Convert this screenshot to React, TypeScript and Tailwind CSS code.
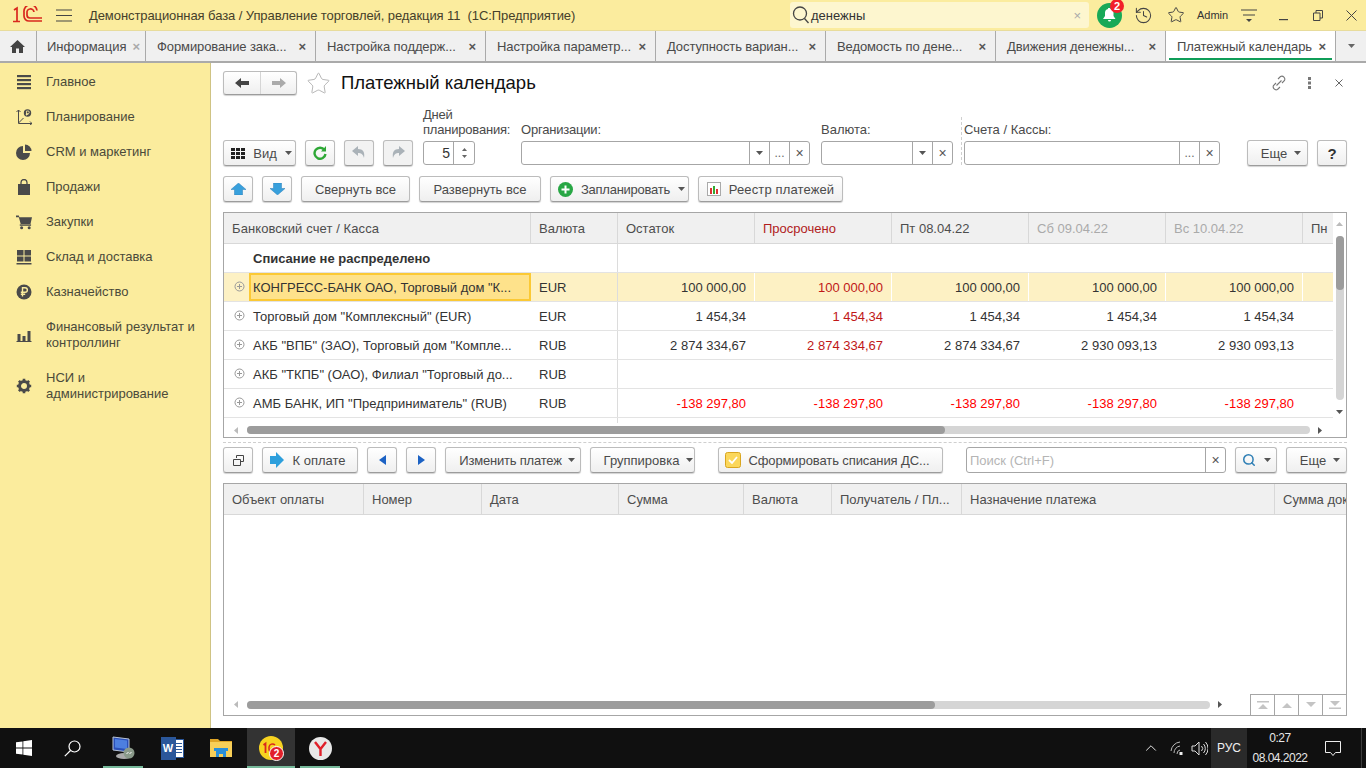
import React from "react";
import { History, Star, Search, ChevronUp } from "lucide-react";
import clsx from "clsx";

const Caret = ({ c = "#555" }: { c?: string }) => (
  <svg width="7" height="4" viewBox="0 0 7 4" className="shrink-0"><path d="M0 0h7L3.5 4z" fill={c} /></svg>
);

const Btn = ({ className, children, off }: { className?: string; children?: React.ReactNode; off?: boolean }) => (
  <div
    className={clsx(
      "h-[26px] shrink-0 flex items-center justify-center rounded-[3px] border border-[#bcbcbc] border-b-[#9c9c9c] shadow-[0_1px_1px_rgba(0,0,0,0.18)] text-[#4a4a4a]",
      off ? "bg-[#f2f2f2]" : "bg-gradient-to-b from-white to-[#efefef]",
      className
    )}
  >
    {children}
  </div>
);

const Tab = ({ label, active }: { label: string; active?: boolean }) => (
  <div className={clsx("w-[170px] h-full flex items-center pl-[11px] pr-[9px] border-r border-[#aaaaaa] relative", active ? "bg-white" : "")}>
    <span className="flex-1 whitespace-nowrap text-[#4a4a4a] tracking-[-0.1px]">{label}</span>
    <span className="text-[#555] font-bold text-[13px] leading-none">×</span>
    {active && <span className="absolute left-[3px] right-[3px] bottom-[1px] h-[2px] bg-[#0f9d58]" />}
  </div>
);

const Side = ({ icon, children, className }: { icon: React.ReactNode; children: React.ReactNode; className?: string }) => (
  <div className={clsx("flex items-center pl-[16px] gap-[14px] text-[#4a4a3a] leading-[16px]", className)}>
    <span className="w-[16px] h-[16px] shrink-0 flex items-center justify-center">{icon}</span>
    <span>{children}</span>
  </div>
);

const I = "#4a4a4a";
const sideIcons = {
  main: <svg width="16" height="16" viewBox="0 0 16 16" fill={I}><rect x="1" y="1" width="14" height="2.2" /><rect x="1" y="5" width="14" height="2.2" /><rect x="1" y="9" width="14" height="2.2" /><rect x="1" y="13" width="14" height="2.2" /></svg>,
  plan: <svg width="16" height="16" viewBox="0 0 16 16" fill="none" stroke={I} strokeWidth="1"><path d="M2.5 1v13.5H16M.5 3l2-2 2 2M14 12.5l2 2-2 1.5M2.5 14l5-5" /><circle cx="11.5" cy="4" r="3.7" fill={I} stroke="none" /><path d="M10.5 6.5V2h1.5a1.2 1.2 0 010 2.6h-2M9.8 5.5h2.5" stroke="#fbec9d" strokeWidth=".8" /></svg>,
  crm: <svg width="16" height="16" viewBox="0 0 16 16" fill={I}><path d="M7 2a7 7 0 107 7H7z" /><path d="M9 0.5a6.5 6.5 0 016.5 6.5H9z" /></svg>,
  sale: <svg width="14" height="16" viewBox="0 0 14 16"><path d="M1 5h12v11H1z" fill={I} /><path d="M4 7V3.5a3 3 0 016 0V7" fill="none" stroke={I} strokeWidth="1.3" /></svg>,
  buy: <svg width="17" height="16" viewBox="0 0 17 16" fill={I}><path d="M0 1h3l.6 2H17l-1.6 7H5L3 3H0z" /><rect x="4" y="10.5" width="12" height="1.5" /><circle cx="6" cy="14" r="1.6" /><circle cx="14" cy="14" r="1.6" /></svg>,
  store: <svg width="16" height="16" viewBox="0 0 16 16" fill={I}><rect x="1" y="1" width="6.5" height="5.5" /><rect x="8.5" y="1" width="6.5" height="5.5" /><rect x="1" y="7.5" width="6.5" height="5" /><rect x="8.5" y="7.5" width="6.5" height="5" /><rect x="0.5" y="14" width="15" height="1.5" /></svg>,
  money: <svg width="16" height="16" viewBox="0 0 16 16"><circle cx="8" cy="8" r="7.5" fill={I} /><path d="M6.5 12.5V3.8h2.6a2.2 2.2 0 010 4.5H4.8M4.8 10.3h4.4" fill="none" stroke="#fbec9d" strokeWidth="1.4" /></svg>,
  fin: <svg width="16" height="16" viewBox="0 0 16 16" fill={I}><rect x="1.5" y="7" width="3" height="7" /><rect x="6.5" y="9" width="3" height="5" /><rect x="11.5" y="4" width="3" height="10" /><rect x="0.5" y="14" width="15" height="1" /></svg>,
  gear: <svg width="16" height="16" viewBox="0 0 16 16"><circle cx="8" cy="8" r="4.5" fill="none" stroke={I} strokeWidth="3" /><path d="M8 .8v3M8 12.2v3M.8 8h3M12.2 8h3M2.9 2.9L5 5M11 11l2.1 2.1M13.1 2.9L11 5M5 11l-2.1 2.1" stroke={I} strokeWidth="2.6" /></svg>,
};

const W = ["w-[307px]", "w-[87px]", "w-[137px]", "w-[137px]", "w-[137px]", "w-[137px]", "w-[137px]", "w-[30px]"];

const HCell = ({ className, children }: { className?: string; children: React.ReactNode }) => (
  <div className={clsx("h-full shrink-0 flex items-center pl-[8px] border-r border-[#d8d8d8] whitespace-nowrap overflow-hidden text-[#4d4d4d]", className)}>{children}</div>
);

const Plus = () => (
  <svg width="11" height="11" viewBox="0 0 11 11" className="absolute left-[10px] top-[8px]" fill="none" stroke="#999"><circle cx="5.5" cy="5.5" r="4.5" /><path d="M3 5.5h5M5.5 3v5" /></svg>
);

const rows = [
  { n: 'КОНГРЕСС-БАНК ОАО, Торговый дом "К...', c: "EUR", v: ["100 000,00", "100 000,00", "100 000,00", "100 000,00", "100 000,00"], sel: true },
  { n: 'Торговый дом "Комплексный" (EUR)', c: "EUR", v: ["1 454,34", "1 454,34", "1 454,34", "1 454,34", "1 454,34"] },
  { n: 'АКБ "ВПБ" (ЗАО), Торговый дом "Компле...', c: "RUB", v: ["2 874 334,67", "2 874 334,67", "2 874 334,67", "2 930 093,13", "2 930 093,13"] },
  { n: 'АКБ "ТКПБ" (ОАО), Филиал "Торговый до...', c: "RUB", v: ["", "", "", "", ""] },
  { n: 'АМБ БАНК, ИП "Предприниматель" (RUB)', c: "RUB", v: ["-138 297,80", "-138 297,80", "-138 297,80", "-138 297,80", "-138 297,80"], neg: true },
];

const Row = ({ r }: { r: (typeof rows)[number] }) => (
  <div className={clsx("h-[29px] flex border-b border-[#e3e3e3] text-[#333]", r.sel && "bg-[#fdf1c4]")}>
    <div className="w-[307px] shrink-0 relative flex items-center pl-[29px]">
      <Plus />
      {r.sel && <span className="absolute left-[25px] top-0 right-0 bottom-0 border-2 border-[#fbc935] bg-[#fee28b]" />}
      <span className="relative whitespace-nowrap">{r.n}</span>
    </div>
    <div className="w-[87px] shrink-0 flex items-center pl-[8px] border-r border-[#dcdcdc]">{r.c}</div>
    {r.v.map((v, i) => (
      <div
        key={i}
        className={clsx(
          "w-[137px] shrink-0 flex items-center justify-end",
          r.sel ? "border-r border-white pr-[8px]" : "pr-[9px]",
          r.neg ? "text-[#ff0000]" : i === 1 && "text-[#c01818]"
        )}
      >
        {v}
      </div>
    ))}
  </div>
);

const HBar = ({ track, thumb }: { track: string; thumb: string }) => (
  <div className="flex items-center h-full">
    <svg width="4" height="7" viewBox="0 0 4 7" className="ml-[10px]"><path d="M4 0v7L0 3.5z" fill="#bbb" /></svg>
    <div className={clsx("ml-[9px] h-[8px] rounded-full bg-[#d5d5d5]", track)}>
      <div className={clsx("h-full rounded-full bg-[#9c9c9c]", thumb)} />
    </div>
    <svg width="4" height="7" viewBox="0 0 4 7" className="ml-[8px]"><path d="M0 0v7l4-3.5z" fill="#555" /></svg>
  </div>
);

const Fld = ({ className, children }: { className?: string; children?: React.ReactNode }) => (
  <div className={clsx("h-[24px] mb-[1px] flex rounded-[3px] border border-[#a6a6a6] bg-white", className)}>{children}</div>
);
const Seg = ({ children }: { children: React.ReactNode }) => (
  <div className="w-[20px] shrink-0 border-l border-[#a6a6a6] flex items-center justify-center text-[#666] text-[12px]">{children}</div>
);
const X = () => <span className="text-[#555] text-[14px] leading-none">×</span>;

const Pager = ({ d }: { d: string }) => (
  <div className="w-[24px] h-full border-l border-[#a6a6a6] flex items-center justify-center">
    <svg width="12" height="8" viewBox="0 0 12 8"><path d={d} fill="#c4c4c4" /></svg>
  </div>
);

export default function App() {
  return (
    <div className="w-[1366px] h-[768px] overflow-hidden flex flex-col bg-white font-['Liberation_Sans',Arial,sans-serif] text-[13px] leading-[15px]">
      {/* title bar */}
      <div className="h-[31px] shrink-0 bg-[#fbec9e] border-b border-[#e8dc9c] flex items-center">
        <svg width="30" height="18" viewBox="0 0 30 18" className="ml-[13px]" fill="none" stroke="#d9281e" strokeWidth="1.7">
          <path d="M1 4l3-2v13M0 15.5h7" />
          <path d="M24 4.5A6 6 0 0011 6v4a5 5 0 005 5h13" />
          <path d="M21 6a3 3 0 00-7 1v2a3 3 0 003 3h12" />
        </svg>
        <svg width="16" height="13" viewBox="0 0 16 13" className="ml-[13px]" stroke="#444" strokeWidth="1.2"><path d="M0 1h16M0 6.5h16M0 12h16" /></svg>
        <span className="ml-[17px] w-[701px] shrink-0 text-[#45402a] whitespace-pre tracking-[-0.08px]">Демонстрационная база / Управление торговлей, редакция 11  (1С:Предприятие)</span>
        <div className="w-[299px] h-[26px] shrink-0 bg-[#fdf6cf] rounded-[3px] flex items-center pl-[2px] pr-[8px]">
          <svg width="18" height="20" viewBox="0 0 18 20" fill="none" stroke="#444" strokeWidth="1.3"><circle cx="8" cy="8.5" r="6.5" /><path d="M12.5 13.5l4 4.5" /></svg>
          <span className="ml-[1px] flex-1 text-[#333]">денежны</span>
          <span className="text-[#aaa] text-[13px] leading-none">×</span>
        </div>
        <div className="relative ml-[8px] w-[25px] h-[25px] rounded-full bg-[#18a957] flex items-center justify-center shrink-0">
          <svg width="13" height="14" viewBox="0 0 13 14" fill="#fff"><path d="M6.5 0a1 1 0 011 1 4 4 0 013 4v3l2 3H0l2-3V5a4 4 0 013-4 1 1 0 011.5-1zM5 12h3a1.5 1.5 0 01-3 0z" /></svg>
          <span className="absolute -top-[4px] -right-[2px] w-[14px] h-[14px] rounded-full bg-[#f2202a] text-white text-[11px] font-bold leading-[14px] text-center">2</span>
        </div>
        <History size={19} strokeWidth={1.3} color="#444" className="ml-[12px] shrink-0" />
        <Star size={18} strokeWidth={1.3} color="#444" className="ml-[14px] shrink-0" />
        <span className="ml-[12px] text-[11px] text-[#333]">Admin</span>
        <svg width="16" height="15" viewBox="0 0 16 15" className="ml-[13px] shrink-0" stroke="#444" strokeWidth="1.2"><path d="M0 2h16M2 7h12" /><path d="M5 11h6l-3 3z" fill="#444" stroke="none" /></svg>
        <svg width="9" height="2" viewBox="0 0 9 2" className="ml-[22px] mt-[10px] shrink-0"><rect width="9" height="1.2" fill="#444" /></svg>
        <svg width="10" height="11" viewBox="0 0 10 11" className="ml-[25px] shrink-0" fill="none" stroke="#444"><path d="M.5 3h6.5v7.5H.5zM3 3V.5h6.5v7.5H7" /></svg>
        <svg width="11" height="11" viewBox="0 0 11 11" className="ml-[23px] shrink-0" stroke="#444"><path d="M.5.5l10 10M10.5.5l-10 10" /></svg>
      </div>

      {/* tabs */}
      <div className="h-[32px] shrink-0 bg-[#f0f0f0] border-b-2 border-[#aaaaaa] flex items-center">
        <div className="w-[37px] h-full border-r border-[#aaaaaa] flex items-center justify-center shrink-0 pr-[2px]">
          <svg width="15" height="13" viewBox="0 0 15 13" fill="#444"><path d="M7.5 0L15 7h-2v6H9V8.5H6V13H2V7H0z" /></svg>
        </div>
        <div className="w-[109px] h-full flex items-center pl-[10px] pr-[5px] border-r border-[#aaaaaa] shrink-0">
          <span className="flex-1 text-[#4a4a4a]">Информация</span>
          <span className="text-[#aaa] font-bold leading-none">×</span>
        </div>
        {["Формирование зака...", "Настройка поддерж...", "Настройка параметр...", "Доступность вариан...", "Ведомость по дене...", "Движения денежны..."].map((t) => (
          <Tab key={t} label={t} />
        ))}
        <Tab label="Платежный календарь" active />
        <div className="flex-1 flex items-center justify-center"><Caret c="#666" /></div>
      </div>

      <div className="flex-1 min-h-0 flex">
        {/* sidebar */}
        <div className="w-[211px] shrink-0 bg-[#fbec9d] border-r border-[#cfc384] pt-[1px]">
          <Side icon={sideIcons.main} className="h-[35px]">Главное</Side>
          <Side icon={sideIcons.plan} className="h-[35px]">Планирование</Side>
          <Side icon={sideIcons.crm} className="h-[35px]">CRM и маркетинг</Side>
          <Side icon={sideIcons.sale} className="h-[35px]">Продажи</Side>
          <Side icon={sideIcons.buy} className="h-[35px]">Закупки</Side>
          <Side icon={sideIcons.store} className="h-[35px]">Склад и доставка</Side>
          <Side icon={sideIcons.money} className="h-[35px]">Казначейство</Side>
          <Side icon={sideIcons.fin} className="h-[51px]">Финансовый результат и<br />контроллинг</Side>
          <Side icon={sideIcons.gear} className="h-[52px]">НСИ и<br />администрирование</Side>
        </div>

        {/* main */}
        <div className="flex-1 min-w-0 pl-[12px] pr-[19px] text-[#4a4a4a]">
          {/* title row */}
          <div className="mt-[8px] h-[24px] flex items-center">
            <div className="w-[74px] h-[24px] flex rounded-[3px] border border-[#bcbcbc] border-b-[#9c9c9c] bg-gradient-to-b from-white to-[#efefef] shadow-[0_1px_1px_rgba(0,0,0,0.18)]">
              <div className="w-[37px] flex items-center justify-center border-r border-[#d5d5d5]">
                <svg width="14" height="10" viewBox="0 0 14 10" fill="#444"><path d="M0 5l6-5v3h8v4H6v3z" /></svg>
              </div>
              <div className="flex-1 flex items-center justify-center">
                <svg width="14" height="10" viewBox="0 0 14 10" fill="#aaa"><path d="M14 5L8 0v3H0v4h8v3z" /></svg>
              </div>
            </div>
            <Star size={25} strokeWidth={0.8} color="#a8a8a8" className="ml-[9px] shrink-0" />
            <span className="ml-[10px] text-[18.5px] leading-[22px] text-[#111]">Платежный календарь</span>
            <svg width="16" height="16" viewBox="0 0 16 16" className="ml-auto" fill="none" stroke="#777" strokeWidth="1.1"><path d="M7 4l2.5-2.5a3 3 0 014 4L11 8M9 12l-2.500 2.500a3 3 0 01-4-4L5 8M5.500 10.500l5-5" /></svg>
            <svg width="3" height="12" viewBox="0 0 3 12" className="ml-[21px]" fill="#777"><rect width="3" height="3" /><rect y="4.5" width="3" height="3" /><rect y="9" width="3" height="3" /></svg>
            <svg width="8" height="8" viewBox="0 0 8 8" className="ml-[24px] mr-[4px]" stroke="#666"><path d="M.5.5l7 7M7.5.5l-7 7" /></svg>
          </div>

          {/* filter row */}
          <div className="mt-[12px] h-[59px] flex items-end">
            <Btn className="w-[73px] gap-[8px] pl-[4px]">
              <svg width="14" height="11" viewBox="0 0 14 11" fill="#222"><path d="M0 0h4v3H0zM5 0h4v3H5zM10 0h4v3h-4zM0 4h4v3H0zM5 4h4v3H5zM10 4h4v3h-4zM0 8h4v3H0zM5 8h4v3H5zM10 8h4v3h-4z" /></svg>
              <span>Вид</span>
              <Caret />
            </Btn>
            <Btn className="w-[30px] ml-[9px]">
              <svg width="14" height="14" viewBox="0 0 14 14" fill="none" stroke="#2ea836" strokeWidth="2.4"><path d="M11.5 4A5.5 5.5 0 1012.5 8" /><path d="M13 0v5.5H8" fill="#2ea836" stroke="none" /></svg>
            </Btn>
            <Btn off className="w-[30px] ml-[9px]">
              <svg width="14" height="14" viewBox="0 0 14 14" fill="#aab2b8"><path d="M6 0L0 5l6 5V7c3 0 5 1 6 5 1-6-1-9-6-9z" /></svg>
            </Btn>
            <Btn off className="w-[30px] ml-[9px]">
              <svg width="14" height="14" viewBox="0 0 14 14" fill="#aab2b8"><path d="M8 0l6 5-6 5V7c-3 0-5 1-6 5-1-6 1-9 6-9z" /></svg>
            </Btn>
            <div className="ml-[10px] w-[98px] shrink-0">
              <div className="whitespace-nowrap mb-[4px] tracking-[-0.2px]">Дней<br />планирования:</div>
              <Fld className="w-[52px]">
                <span className="w-[29px] pr-[3px] text-right leading-[22px] text-[#333] text-[14px]">5</span>
                <div className="flex-1 border-l border-[#a6a6a6] flex flex-col items-center justify-around py-[4px]">
                  <svg width="5" height="3" viewBox="0 0 5 3"><path d="M0 3h5L2.5 0z" fill="#666" /></svg>
                  <svg width="5" height="3" viewBox="0 0 5 3"><path d="M0 0h5L2.5 3z" fill="#666" /></svg>
                </div>
              </Fld>
            </div>
            <div className="w-[289px] shrink-0">
              <div className="mb-[4px] tracking-[-0.2px]">Организации:</div>
              <Fld>
                <div className="flex-1" />
                <Seg><Caret /></Seg>
                <Seg>...</Seg>
                <Seg><X /></Seg>
              </Fld>
            </div>
            <div className="w-[132px] ml-[11px] shrink-0">
              <div className="mb-[4px]">Валюта:</div>
              <Fld>
                <div className="flex-1" />
                <Seg><Caret /></Seg>
                <Seg><X /></Seg>
              </Fld>
            </div>
            <div className="ml-[8px] h-[48px] mb-[1px] border-l border-dashed border-[#cfcfcf]" />
            <div className="w-[256px] ml-[2px] shrink-0">
              <div className="mb-[4px]">Счета / Кассы:</div>
              <Fld>
                <div className="flex-1" />
                <Seg>...</Seg>
                <Seg><X /></Seg>
              </Fld>
            </div>
            <Btn className="w-[61px] ml-[27px] gap-[7px] pl-[7px]"><span>Еще</span><Caret /></Btn>
            <Btn className="w-[30px] ml-[9px] font-bold text-[#333] text-[15px]">?</Btn>
          </div>

          {/* second row */}
          <div className="mt-[10px] flex gap-[9px]">
            <Btn className="w-[30px]"><svg width="15" height="12" viewBox="0 0 15 12"><path d="M7.500 0L15 6.500h-3.500V12h-8V6.500H0z" fill="#38a0dc" stroke="#2a7fb8" strokeWidth=".5" /></svg></Btn>
            <Btn className="w-[30px]"><svg width="15" height="12" viewBox="0 0 15 12"><path d="M7.500 12L0 5.500h3.500V0h8v5.500H15z" fill="#38a0dc" stroke="#2a7fb8" strokeWidth=".5" /></svg></Btn>
            <Btn className="w-[109px]">Свернуть все</Btn>
            <Btn className="w-[122px]">Развернуть все</Btn>
            <Btn className="w-[139px] gap-[8px] pl-[4px]">
              <svg width="15" height="15" viewBox="0 0 15 15"><circle cx="7.5" cy="7.5" r="7.5" fill="#28a745" /><path d="M3.5 7.5h8M7.5 3.5v8" stroke="#fff" strokeWidth="2" /></svg>
              <span className="tracking-[-0.25px]">Запланировать</span>
              <Caret />
            </Btn>
            <Btn className="w-[145px] gap-[8px]">
              <svg width="14" height="14" viewBox="0 0 14 14"><rect x=".5" y=".5" width="13" height="13" fill="#fff" stroke="#aaa" /><rect x="3" y="6" width="2" height="6" fill="#d33" /><rect x="6" y="4" width="2" height="8" fill="#3a3" /><rect x="9" y="7" width="2" height="5" fill="#d33" /></svg>
              <span className="tracking-[0.13px]">Реестр платежей</span>
            </Btn>
          </div>

          {/* upper table */}
          <div className="mt-[10px] h-[226px] border border-[#a6a6a6] flex">
            <div className="w-[1109px] shrink-0 flex flex-col">
              <div className="h-[210px] overflow-hidden">
                <div className="h-[31px] bg-[#f0f0f0] border-b border-[#d8d8d8] flex">
                  <HCell className={clsx(W[0], "tracking-[0.1px]")}>Банковский счет / Касса</HCell>
                  <HCell className={W[1]}>Валюта</HCell>
                  <HCell className={W[2]}>Остаток</HCell>
                  <HCell className={clsx(W[3], "text-[#b01c1c]")}>Просрочено</HCell>
                  <HCell className={W[4]}>Пт 08.04.22</HCell>
                  <HCell className={clsx(W[5], "text-[#aaaaaa]")}>Сб 09.04.22</HCell>
                  <HCell className={clsx(W[6], "text-[#aaaaaa]")}>Вс 10.04.22</HCell>
                  <HCell className="w-[30px] border-r-0">Пн</HCell>
                </div>
                <div className="h-[29px] flex border-b border-[#e3e3e3]">
                  <div className="w-[394px] shrink-0 pl-[29px] flex items-center font-bold text-[#333] border-r border-[#dcdcdc]">Списание не распределено</div>
                </div>
                {rows.map((r) => <Row key={r.n} r={r} />)}
                <div className="w-[394px] h-[10px] border-r border-[#dcdcdc]" />
              </div>
              <div className="flex-1"><HBar track="w-[1063px]" thumb="w-[698px]" /></div>
            </div>
            <div className="flex-1 flex flex-col items-center pt-[9px]">
              <svg width="7" height="4" viewBox="0 0 7 4"><path d="M0 4h7L3.500 0z" fill="#bbb" /></svg>
              <div className="mt-[10px] w-[8px] h-[164px] rounded-full bg-[#d5d5d5]">
                <div className="h-[54px] rounded-full bg-[#9c9c9c]" />
              </div>
              <svg width="7" height="4" viewBox="0 0 7 4" className="mt-[10px]"><path d="M0 0h7L3.500 4z" fill="#555" /></svg>
            </div>
          </div>

          <div className="mt-[4px] border-t border-dashed border-[#cfcfcf]" />

          {/* toolbar */}
          <div className="mt-[4px] flex">
            <Btn className="w-[30px]">
              <svg width="11" height="11" viewBox="0 0 11 11" fill="none" stroke="#444"><path d="M3.500 3V.5h7v6H8M.5 4.500h7v6h-7z" /></svg>
            </Btn>
            <Btn className="w-[96px] ml-[9px] gap-[8px] pr-[4px]">
              <svg width="14" height="16" viewBox="0 0 14 16"><path d="M6 0l8 8-8 8v-4H0V4h6z" fill="#2d9fdc" /></svg>
              <span>К оплате</span>
            </Btn>
            <Btn className="w-[30px] ml-[9px]"><svg width="7" height="10" viewBox="0 0 7 10"><path d="M7 0v10L0 5z" fill="#1c62c4" /></svg></Btn>
            <Btn className="w-[30px] ml-[9px]"><svg width="7" height="10" viewBox="0 0 7 10"><path d="M0 0v10l7-5z" fill="#1c62c4" /></svg></Btn>
            <Btn className="w-[136px] ml-[9px] gap-[6px] pl-[8px]"><span className="tracking-[-0.2px]">Изменить платеж</span><Caret /></Btn>
            <Btn className="w-[105px] ml-[9px] gap-[7px] pl-[12px]"><span>Группировка</span><Caret /></Btn>
            <Btn className="w-[225px] ml-[23px] gap-[7px] pr-[6px]">
              <svg width="16" height="16" viewBox="0 0 16 16"><rect x=".5" y=".5" width="15" height="15" rx="2" fill="#fbd75b" stroke="#d9a520" /><path d="M4 8l3 3 5-6" fill="none" stroke="#fff" strokeWidth="1.800" /></svg>
              <span className="tracking-[-0.1px]">Сформировать списания ДС...</span>
            </Btn>
            <div className="w-[260px] h-[26px] ml-[23px] rounded-[3px] border border-[#a6a6a6] flex">
              <span className="flex-1 pl-[3px] leading-[25px] text-[#b5b5b5]">Поиск (Ctrl+F)</span>
              <Seg><X /></Seg>
            </div>
            <Btn className="w-[42px] ml-[9px] gap-[8px]"><Search size={14} strokeWidth={2.6} color="#2f7fb5" /><Caret /></Btn>
            <Btn className="w-[61px] ml-[9px] gap-[7px] pl-[7px]"><span>Еще</span><Caret /></Btn>
          </div>

          {/* lower table */}
          <div className="mt-[10px] h-[233px] border border-[#a6a6a6] flex flex-col">
            <div className="h-[31px] shrink-0 bg-[#f0f0f0] border-b border-[#d8d8d8] flex overflow-hidden">
              <HCell className="w-[140px]">Объект оплаты</HCell>
              <HCell className="w-[118px]">Номер</HCell>
              <HCell className="w-[137px]">Дата</HCell>
              <HCell className="w-[125px]">Сумма</HCell>
              <HCell className="w-[88px]">Валюта</HCell>
              <HCell className="w-[130px]">Получатель / Пл...</HCell>
              <HCell className="w-[313px]">Назначение платежа</HCell>
              <HCell className="w-[71px] border-r-0">Сумма документа</HCell>
            </div>
            <div className="flex-1" />
            <div className="h-[21px] shrink-0 flex justify-between">
              <HBar track="w-[963px]" thumb="w-[688px]" />
              <div className="flex border-t border-[#a6a6a6]">
                <Pager d="M0 0h12v1.500H0zM1 8l5-5 5 5z" />
                <Pager d="M1 7l5-5 5 5z" />
                <Pager d="M1 1l5 5 5-5z" />
                <Pager d="M0 6.500h12V8H0zM1 0l5 5 5-5z" />
              </div>
            </div>
          </div>
        </div>
      </div>

      {/* taskbar */}
      <div className="h-[40px] shrink-0 bg-[#101010] flex items-center text-white">
        <div className="w-[48px] flex justify-center shrink-0">
          <svg width="16" height="16" viewBox="0 0 16 16" fill="#fff"><path d="M0 2.300L6.500 1.400v6.200H0zM7.300 1.300L16 0v7.600H7.300zM0 8.400h6.500v6.200L0 13.700zM7.300 8.400H16V16l-8.700-1.200z" /></svg>
        </div>
        <div className="w-[48px] flex justify-center shrink-0">
          <svg width="17" height="17" viewBox="0 0 17 17" fill="none" stroke="#fff" strokeWidth="1.200"><circle cx="10.500" cy="6.500" r="5.500" /><path d="M6.500 10.500L.8 16.200" /></svg>
        </div>
        <div className="ml-[7px] w-[40px] h-full relative flex items-center justify-center shrink-0">
          <svg width="24" height="25" viewBox="0 0 24 25"><path d="M2 1l16 2v13L2 14z" fill="#2a4fb8" stroke="#b8c4d8" /><path d="M4 3l12 1.500V13L4 11.500z" fill="#4d7fe0" /><ellipse cx="13" cy="20" rx="8" ry="3" fill="#aaa" /><circle cx="18" cy="17" r="5.500" fill="#8a9a8a" /><path d="M15.500 18l2-2M18.500 18l2-2" stroke="#fff" /></svg>
          <span className="absolute left-0 right-0 bottom-0 h-[2px] bg-[#76b99a]" />
        </div>
        <div className="ml-[9px] w-[40px] flex justify-center shrink-0">
          <div className="relative w-[23px] h-[23px] flex justify-end">
            <div className="w-[18px] h-[19px] mt-[2px] bg-white border border-[#2b579a] flex flex-col justify-center gap-[2px] pl-[8px] pr-[1px]">
              <span className="block h-[1px] bg-[#2b579a]" />
              <span className="block h-[1px] bg-[#2b579a]" />
              <span className="block h-[1px] bg-[#2b579a]" />
              <span className="block h-[1px] bg-[#2b579a]" />
            </div>
            <span className="absolute left-0 top-0 w-[15px] h-[23px] bg-[#2b579a] text-white font-bold text-[11px] leading-[23px] text-center">W</span>
          </div>
        </div>
        <div className="ml-[9px] w-[40px] flex justify-center shrink-0">
          <svg width="22" height="19" viewBox="0 0 22 19"><path d="M0 0h8l2 2h12v4H0z" fill="#e0a526" /><rect y="3" width="22" height="15" fill="#f8cf58" /><path d="M6 18v-6h10v6h-3v-3H9v3z" fill="#2b8fd8" /><path d="M4 9h14v3H4z" fill="#2b8fd8" /></svg>
        </div>
        <div className="ml-[6px] w-[48px] h-full bg-[#333333] relative flex items-center justify-center shrink-0">
          <svg width="24" height="24" viewBox="0 0 24 24"><circle cx="12" cy="12" r="12" fill="#f7d320" /><path d="M4.500 9l2-1.500V17" fill="none" stroke="#d9281e" strokeWidth="1.800" /><path d="M16 9a3.500 3.500 0 00-6 2v2a3.500 3.500 0 003.500 3.500H20" fill="none" stroke="#d9281e" strokeWidth="1.500" /></svg>
          <span className="absolute left-[22px] top-[18px] w-[15px] h-[15px] rounded-full bg-[#e2202a] border border-white text-white text-[10px] font-bold leading-[13px] text-center">2</span>
          <span className="absolute left-0 right-0 bottom-0 h-[2px] bg-[#76b99a]" />
        </div>
        <div className="ml-[5px] w-[40px] h-full relative flex items-center justify-center shrink-0">
          <div className="w-[23px] h-[23px] rounded-full bg-[#e8e8e8] flex items-center justify-center">
            <svg width="13" height="15" viewBox="0 0 13 15" fill="none" stroke="#e0202a" strokeWidth="2.400"><path d="M1 1l5.500 7L12 1M6.500 8v7" /></svg>
          </div>
          <span className="absolute left-0 right-0 bottom-0 h-[2px] bg-[#76b99a]" />
        </div>
        <div className="ml-auto flex items-center h-full">
          <ChevronUp size={18} strokeWidth={1.300} color="#e5e5e5" />
          <svg width="16" height="15" viewBox="0 0 16 15" className="ml-[10px]" fill="none" stroke="#bbb"><path d="M1 10a10 10 0 019-9M4 12a7 7 0 016-7M7 13a4 4 0 013-4" /><rect x="9.500" y="11" width="3" height="3" fill="#eee" stroke="none" /></svg>
          <svg width="17" height="15" viewBox="0 0 17 15" className="ml-[5px]" fill="none" stroke="#ddd"><path d="M1 5h3l4-4v13l-4-4H1zM10.500 5a3.500 3.500 0 010 5M12.500 3a6.500 6.500 0 010 9M14.500 1a9.500 9.500 0 010 13" /></svg>
          <div className="ml-[3px] w-[36px] h-full bg-[#2a2a2a] flex items-center justify-center text-[12px] text-[#f0f0f0]">РУС</div>
          <div className="w-[66px] text-center text-[12px] leading-[20px] tracking-[-0.5px] text-[#e8e8e8]">0:27<br />08.04.2022</div>
          <svg width="16" height="15" viewBox="0 0 16 15" className="ml-[12px]" fill="none" stroke="#eee"><path d="M.5.500h15v11h-5L8 14.500 5.500 11.500h-5z" /></svg>
          <div className="ml-[20px] mr-[4px] w-[1px] h-full bg-[#3c3c3c]" />
        </div>
      </div>
    </div>
  );
}
